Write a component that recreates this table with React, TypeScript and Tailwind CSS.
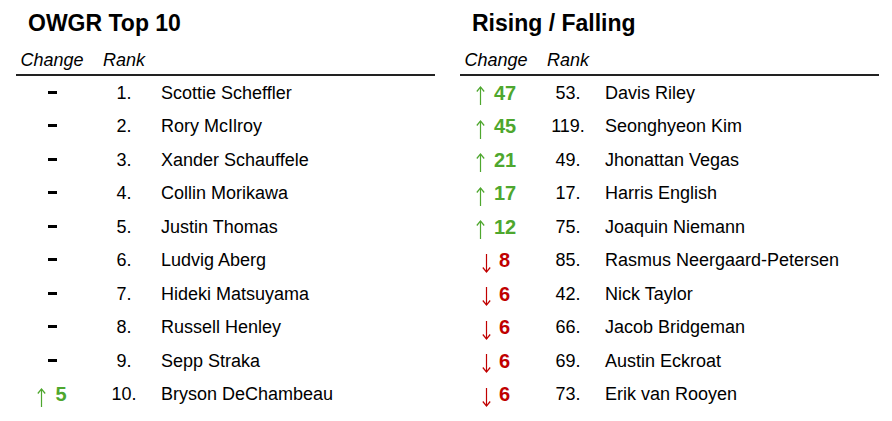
import React from "react";

type Row = { dir: "up" | "down" | "none"; n?: number; rank: number; name: string };

const top10: Row[] = [
  { dir: "none", rank: 1, name: "Scottie Scheffler" },
  { dir: "none", rank: 2, name: "Rory McIlroy" },
  { dir: "none", rank: 3, name: "Xander Schauffele" },
  { dir: "none", rank: 4, name: "Collin Morikawa" },
  { dir: "none", rank: 5, name: "Justin Thomas" },
  { dir: "none", rank: 6, name: "Ludvig Aberg" },
  { dir: "none", rank: 7, name: "Hideki Matsuyama" },
  { dir: "none", rank: 8, name: "Russell Henley" },
  { dir: "none", rank: 9, name: "Sepp Straka" },
  { dir: "up", n: 5, rank: 10, name: "Bryson DeChambeau" },
];

const movers: Row[] = [
  { dir: "up", n: 47, rank: 53, name: "Davis Riley" },
  { dir: "up", n: 45, rank: 119, name: "Seonghyeon Kim" },
  { dir: "up", n: 21, rank: 49, name: "Jhonattan Vegas" },
  { dir: "up", n: 17, rank: 17, name: "Harris English" },
  { dir: "up", n: 12, rank: 75, name: "Joaquin Niemann" },
  { dir: "down", n: 8, rank: 85, name: "Rasmus Neergaard-Petersen" },
  { dir: "down", n: 6, rank: 42, name: "Nick Taylor" },
  { dir: "down", n: 6, rank: 66, name: "Jacob Bridgeman" },
  { dir: "down", n: 6, rank: 69, name: "Austin Eckroat" },
  { dir: "down", n: 6, rank: 73, name: "Erik van Rooyen" },
];

// thin arrow glyph, drawn since the font's arrow is too small
function Arrow({ up }: { up: boolean }) {
  return (
    <svg width="9" height="19" viewBox="0 0 9 19" className="mt-[6px]" fill="none" stroke="currentColor" strokeWidth="1.2">
      {up ? (
        <>
          <line x1="4.5" y1="1" x2="4.5" y2="19" />
          <polyline points="0.8,5.5 4.5,1 8.2,5.5" />
        </>
      ) : (
        <>
          <line x1="4.5" y1="0" x2="4.5" y2="18" />
          <polyline points="0.8,13.5 4.5,18 8.2,13.5" />
        </>
      )}
    </svg>
  );
}

function Change({ r }: { r: Row }) {
  if (r.dir === "none") return <span className="block w-[9px] h-[3px] bg-black -mt-[1px]" />;
  const up = r.dir === "up";
  return (
    <span className={`flex items-center ${up ? "gap-[9px] text-[#4ea72e]" : "gap-[8px] text-[#c00000]"}`}>
      <Arrow up={up} />
      <span className="text-[20px] font-bold leading-none">{r.n}</span>
    </span>
  );
}

function Table({ title, rows }: { title: string; rows: Row[] }) {
  return (
    <div className="w-[419px]">
      <h2 className="pl-[12px] pt-[12px] text-[23px] font-bold leading-none text-black">{title}</h2>
      <div className="mt-[16px] flex text-[18px] italic leading-none pb-[5px] border-b-2 border-[#222]">
        <div className="w-[72px] text-center">Change</div>
        <div className="w-[72px] text-center">Rank</div>
      </div>
      {rows.map((r, i) => (
        <div key={i} className="flex items-center h-[33.5px] text-[18px] leading-none">
          <div className="w-[72px] flex justify-center"><Change r={r} /></div>
          <div className="w-[72px] text-center">{r.rank}.</div>
          <div className="pl-[1px]">{r.name}</div>
        </div>
      ))}
    </div>
  );
}

export default function App() {
  return (
    <div className="w-[892px] h-[421px] bg-white flex gap-[25px] pl-[16px] text-black" style={{ fontFamily: '"Liberation Sans", Arial, sans-serif' }}>
      <Table title="OWGR Top 10" rows={top10} />
      <Table title="Rising / Falling" rows={movers} />
    </div>
  );
}
